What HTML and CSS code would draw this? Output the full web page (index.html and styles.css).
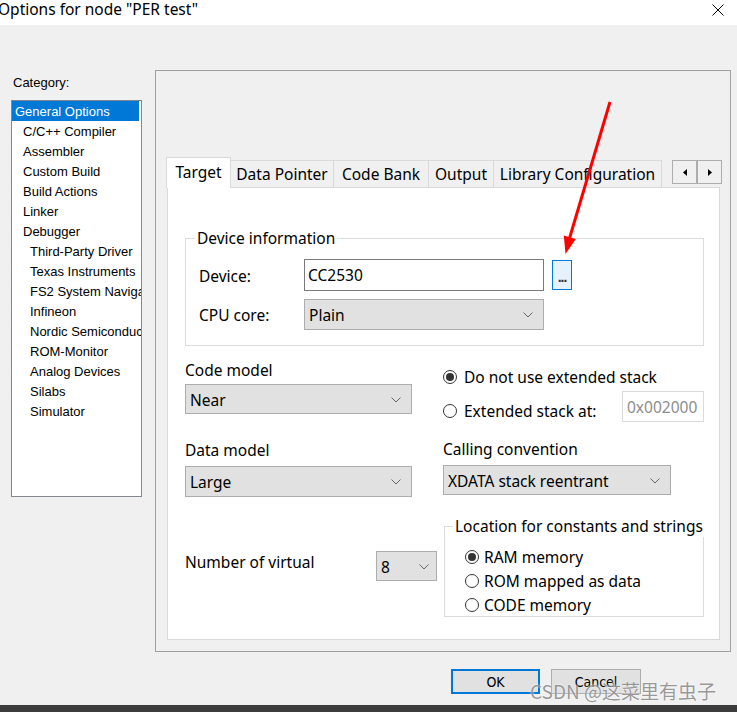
FILE: index.html
```html
<!DOCTYPE html>
<html lang="en">
<head>
    <meta charset="UTF-8">
    <meta name="viewport" content="width=device-width, initial-scale=1.0">
    <title>Options for node "PER test"</title>
    <link rel="stylesheet" href="styles.css">
</head>

<body>
    <!-- barra de titulo -->
    <div class="titlebar">
        <span class="title">Options for node "PER test"</span>
        <svg class="close" width="12" height="12" viewBox="0 0 12 12">
            <path d="M0.5 0.5 L11.5 11.5 M11.5 0.5 L0.5 11.5" stroke="#000" stroke-width="1" fill="none"/>
        </svg>
    </div>

    <div class="dialog">
        <div class="category">
            <div class="category-label">Category:</div>
            <ul class="category-list">
                <li class="selected">General Options</li>
                <li class="lvl1">C/C++ Compiler</li>
                <li class="lvl1">Assembler</li>
                <li class="lvl1">Custom Build</li>
                <li class="lvl1">Build Actions</li>
                <li class="lvl1">Linker</li>
                <li class="lvl1">Debugger</li>
                <li class="lvl2">Third-Party Driver</li>
                <li class="lvl2">Texas Instruments</li>
                <li class="lvl2">FS2 System Navigator</li>
                <li class="lvl2">Infineon</li>
                <li class="lvl2">Nordic Semiconductor</li>
                <li class="lvl2">ROM-Monitor</li>
                <li class="lvl2">Analog Devices</li>
                <li class="lvl2">Silabs</li>
                <li class="lvl2">Simulator</li>
            </ul>
        </div>

        <div class="panel">
            <div class="tabs">
                <div class="tab active">Target</div>
                <div class="tab tab-pointer">Data Pointer</div>
                <div class="tab tab-bank">Code Bank</div>
                <div class="tab tab-output">Output</div>
                <div class="tab tab-library">Library Configuration</div>
                <div class="tab-scroll">
                    <span class="scroll-btn"><svg width="4" height="7" viewBox="0 0 4 7"><path d="M4 0 L0 3.5 L4 7 Z" fill="#000"/></svg></span>
                    <span class="scroll-btn"><svg width="4" height="7" viewBox="0 0 4 7"><path d="M0 0 L4 3.5 L0 7 Z" fill="#000"/></svg></span>
                </div>
            </div>

            <div class="page">
                <fieldset class="group device-info">
                    <legend>Device information</legend>
                    <div class="device-grid">
                        <span class="label">Device:</span>
                        <div class="textbox">CC2530</div>
                        <button class="browse">...</button>
                        <span class="label">CPU core:</span>
                        <div class="select">Plain
                            <svg class="chevron" width="10" height="6" viewBox="0 0 10 6"><path d="M0.5 0.5 L5 5 L9.5 0.5" stroke="#666" fill="none"/></svg>
                        </div>
                    </div>
                </fieldset>

                <div class="models">
                    <div class="col-left">
                        <div class="label">Code model</div>
                        <div class="select code-model">Near
                            <svg class="chevron" width="10" height="6" viewBox="0 0 10 6"><path d="M0.5 0.5 L5 5 L9.5 0.5" stroke="#666" fill="none"/></svg>
                        </div>
                        <div class="label data-label">Data model</div>
                        <div class="select data-model">Large
                            <svg class="chevron" width="10" height="6" viewBox="0 0 10 6"><path d="M0.5 0.5 L5 5 L9.5 0.5" stroke="#666" fill="none"/></svg>
                        </div>
                    </div>
                    <div class="col-right">
                        <div class="radio first"><span class="dot checked"></span>Do not use extended stack</div>
                        <div class="stack-row">
                            <div class="radio"><span class="dot"></span>Extended stack at:</div>
                            <div class="textbox disabled">0x002000</div>
                        </div>
                        <div class="label calling-label">Calling convention</div>
                        <div class="select calling">XDATA stack reentrant
                            <svg class="chevron" width="10" height="6" viewBox="0 0 10 6"><path d="M0.5 0.5 L5 5 L9.5 0.5" stroke="#666" fill="none"/></svg>
                        </div>
                    </div>
                </div>

                <div class="lower">
                    <div class="virtual">
                        <span class="label">Number of virtual</span>
                        <div class="select small">8
                            <svg class="chevron" width="10" height="6" viewBox="0 0 10 6"><path d="M0.5 0.5 L5 5 L9.5 0.5" stroke="#666" fill="none"/></svg>
                        </div>
                    </div>
                    <fieldset class="group location">
                        <legend>Location for constants and strings</legend>
                        <div class="radio"><span class="dot checked"></span>RAM memory</div>
                        <div class="radio"><span class="dot"></span>ROM mapped as data</div>
                        <div class="radio"><span class="dot"></span>CODE memory</div>
                    </fieldset>
                </div>
            </div>
        </div>
    </div>

    <div class="buttons">
        <button class="btn default">OK</button>
        <button class="btn">Cancel</button>
    </div>
    <div class="taskbar"></div>

    <div class="watermark">CSDN @这菜里有虫子</div>

    <!-- flecha roja encima del dialogo -->
    <svg class="arrow" width="737" height="712" viewBox="0 0 737 712">
        <line x1="610" y1="102" x2="569" y2="240" stroke="#f00" stroke-width="3"/>
        <polygon points="565.5,254 575.8,239 563.8,235.6" fill="#f00"/>
    </svg>
</body>

</html>
```

FILE: styles.css
```css
body {
    margin: 0;
    width: 737px;
    height: 712px;
    overflow: hidden;
    position: relative;
    background-color: #f0f0f0;
    font-family: "Noto Sans", "Liberation Sans", sans-serif;
    font-size: 15.5px;
    color: #000;
}

.titlebar {
    height: 25px;
    background-color: #fff;
    display: flex;
    justify-content: space-between;
    align-items: flex-start;
}

.title {
    margin-left: -2px;
    font-size: 15.5px;
    line-height: 18px;
    white-space: nowrap;
}

.close {
    margin-top: 4px;
    margin-right: 13px;
}

.dialog {
    display: flex;
    padding-top: 45px;
}

/* lista de categorias */
.category {
    width: 155px;
    padding-left: 11px;
    box-sizing: border-box;
    font-family: "Liberation Sans", Arial, sans-serif;
    font-size: 13px;
}

.category-label {
    margin-top: 5px;
    padding-left: 2px;
    line-height: 16px;
}

.category-list {
    list-style: none;
    margin: 9px 0 0;
    padding: 0;
    width: 131px;
    height: 397px;
    border: 1px solid #828790;
    background-color: #fff;
    box-sizing: border-box;
    overflow: hidden;
}

.category-list li {
    height: 20px;
    line-height: 22px;
    white-space: nowrap;
}

.category-list .selected {
    background-color: #0078d7;
    color: #fff;
    padding-left: 3px;
    margin-right: 2px;
}

.category-list .lvl1 {
    padding-left: 11px;
}

.category-list .lvl2 {
    padding-left: 18px;
}

/* panel con pestañas */
.panel {
    width: 576px;
    height: 582px;
    border: 1px solid #a0a0a0;
    box-sizing: border-box;
    padding: 86px 0 0 10px;
}

.tabs {
    display: flex;
    align-items: flex-end;
    height: 30px;
    width: 556px;
}

.tab {
    flex-shrink: 0;
    height: 27px;
    line-height: 27px;
    border: 1px solid #d9d9d9;
    border-bottom: none;
    margin-left: -1px;
    box-sizing: border-box;
    background-color: #f0f0f0;
    text-align: center;
    white-space: nowrap;
}

.tab.active {
    width: 65px;
    margin-left: 0;
    height: 31px;
    line-height: 29px;
    margin-bottom: -1px;
    background-color: #fff;
    position: relative;
    z-index: 1;
}

.tab-pointer {
    width: 104px;
}

.tab-bank {
    width: 96px;
}

.tab-output {
    width: 66px;
}

.tab-library {
    width: 169px;
}

.tab-scroll {
    margin-left: auto;
    align-self: flex-start;
    margin-top: 3px;
    display: flex;
}

.scroll-btn {
    width: 25px;
    height: 24px;
    border: 1px solid #adadad;
    box-sizing: border-box;
    background-color: #f0f0f0;
    display: flex;
    align-items: center;
    justify-content: center;
}

.page {
    margin-left: 1px;
    width: 553px;
    height: 453px;
    border: 1px solid #d9d9d9;
    box-sizing: border-box;
    background-color: #fff;
    padding: 40px 0 0 17px;
}

.group {
    margin: 0;
    border: 1px solid #dcdcdc;
    box-sizing: border-box;
    min-width: 0;
}

.group legend {
    padding: 0 2px;
    line-height: 21px;
    white-space: nowrap;
}

.device-info {
    width: 519px;
    padding: 10px 0 15px 9px;
}

.device-grid {
    margin-left: 4px;
    display: grid;
    grid-template-columns: 97px 240px 20px;
    grid-template-rows: 32px 31px;
    column-gap: 8px;
    row-gap: 8px;
    align-items: center;
}

.label {
    line-height: 20px;
    padding-top: 1px;
    white-space: nowrap;
}

.textbox {
    height: 100%;
    border: 1px solid #7a7a7a;
    box-sizing: border-box;
    padding-left: 3px;
    display: flex;
    align-items: center;
}

.textbox.disabled {
    width: 82px;
    height: 31px;
    margin-left: auto;
    border-color: #dadada;
    color: #8d8d8d;
    padding-left: 4px;
}

.browse {
    height: 30px;
    margin: 0;
    padding: 4px 0 0;
    border: 1px solid #0078d7;
    background-color: #e5f1fb;
    font-family: "Liberation Sans", Arial, sans-serif;
    font-size: 14px;
    font-weight: bold;
    letter-spacing: -1px;
    color: #333;
}

.select {
    height: 31px;
    border: 1px solid #adadad;
    box-sizing: border-box;
    background-color: #e1e1e1;
    padding: 1px 10px 0 4px;
    display: flex;
    align-items: center;
    justify-content: space-between;
    white-space: nowrap;
}

.models {
    display: flex;
    margin-top: 13px;
}

.col-left {
    width: 227px;
    margin-right: 31px;
}

.code-model {
    margin-top: 4px;
    height: 30px;
}

.data-label {
    margin-top: 25px;
}

.data-model {
    margin-top: 6px;
}

.col-right {
    width: 261px;
}

.radio {
    display: flex;
    align-items: center;
    height: 24px;
    padding-top: 1px;
    box-sizing: border-box;
    white-space: nowrap;
}

.radio .dot {
    width: 14px;
    height: 14px;
    border: 1px solid #333;
    border-radius: 50%;
    box-sizing: border-box;
    margin-right: 5px;
    position: relative;
    flex-shrink: 0;
}

.radio .dot.checked::after {
    content: "";
    position: absolute;
    left: 2px;
    top: 2px;
    width: 8px;
    height: 8px;
    border-radius: 50%;
    background-color: #333;
}

.col-right .radio .dot {
    margin-right: 7px;
}

.col-right .first {
    margin-top: 5px;
}

.stack-row {
    display: flex;
    align-items: flex-start;
    margin-top: 3px;
}

.stack-row .radio {
    margin-top: 7px;
}

.calling-label {
    margin-top: 16px;
}

.calling {
    margin-top: 6px;
    width: 228px;
    height: 30px;
}

.lower {
    display: flex;
    margin-top: 19px;
}

.virtual {
    width: 259px;
    display: flex;
    align-items: flex-start;
    padding-top: 35px;
}

.virtual .label {
    width: 191px;
}

.select.small {
    width: 61px;
    height: 30px;
    padding-right: 7px;
}

.location {
    width: 260px;
    padding: 7px 0 0 8px;
}

.location .radio {
    margin-left: 12px;
}

/* botones inferiores */
.buttons {
    display: flex;
    justify-content: flex-end;
    gap: 11px;
    margin-top: 17px;
    padding-right: 96px;
}

.btn {
    width: 90px;
    height: 25px;
    margin: 0;
    padding: 0;
    border: 1px solid #adadad;
    background-color: #e1e1e1;
    font-family: "DejaVu Sans Condensed", "Liberation Sans", sans-serif;
    font-size: 14px;
    color: #000;
}

.btn.default {
    width: 89px;
    border: 2px solid #0078d7;
}

.taskbar {
    margin-top: 11px;
    height: 7px;
    background-color: #3c3c3c;
}

.watermark {
    position: absolute;
    left: 530px;
    top: 678px;
    font-family: "Noto Sans CJK SC", "Noto Sans", sans-serif;
    font-size: 19px;
    line-height: 26px;
    color: rgba(120, 120, 120, 0.75);
    text-shadow: 0 0 2px #fff;
    white-space: nowrap;
}

.arrow {
    position: absolute;
    left: 0;
    top: 0;
    pointer-events: none;
}
```
